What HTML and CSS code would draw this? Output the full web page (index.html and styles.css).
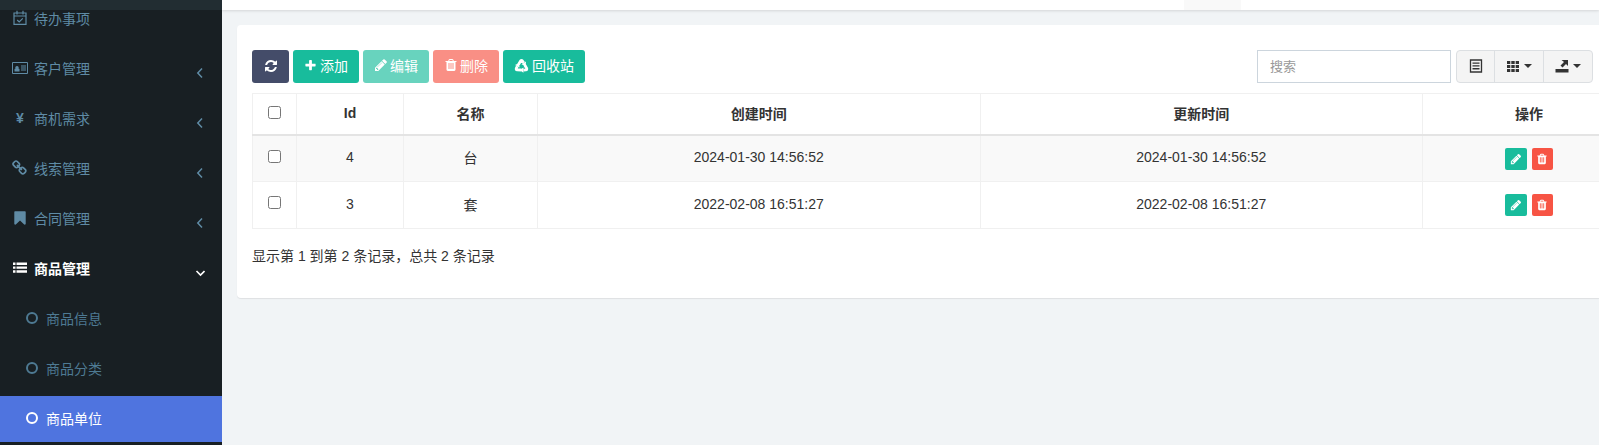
FILE: index.html
```html
<!DOCTYPE html>
<html lang="zh-CN">
<head>
    <meta charset="UTF-8">
    <title>商品单位</title>
    <link rel="stylesheet" href="styles.css">
</head>
<body>

    <!-- icons used more than once -->
    <svg class="sprite" xmlns="http://www.w3.org/2000/svg">
        <symbol id="i-pencil" viewBox="0 0 1792 1792"><path fill="currentColor" d="M491 1536l91-91-235-235-91 91v107h128v128h107zm523-928q0-22-22-22-10 0-17 7l-542 542q-7 7-7 17 0 22 22 22 10 0 17-7l542-542q7-7 7-17zm-54-192l416 416-832 832h-416v-416zm683 96q0 53-37 90l-166 165-416-416 165-166q36-38 90-38 53 0 91 38l235 234q37 39 37 93z"/></symbol>
        <symbol id="i-trash" viewBox="0 0 1792 1792"><path fill="currentColor" d="M704 1376v-704q0-14-9-23t-23-9h-64q-14 0-23 9t-9 23v704q0 14 9 23t23 9h64q14 0 23-9t9-23zm256 0v-704q0-14-9-23t-23-9h-64q-14 0-23 9t-9 23v704q0 14 9 23t23 9h64q14 0 23-9t9-23zm256 0v-704q0-14-9-23t-23-9h-64q-14 0-23 9t-9 23v704q0 14 9 23t23 9h64q14 0 23-9t9-23zm-544-992h448l-48-117q-7-9-17-11h-317q-10 2-17 11zm928 32v64q0 14-9 23t-23 9h-96v948q0 83-47 143.500t-113 60.500h-832q-66 0-113-58.500t-47-141.500v-952h-96q-14 0-23-9t-9-23v-64q0-14 9-23t23-9h309l70-167q15-37 54-63t79-26h320q40 0 79 26t54 63l70 167h309q14 0 23 9t9 23z"/></symbol>
        <symbol id="i-angle-left" viewBox="0 0 10 14"><path fill="none" stroke="currentColor" stroke-width="1.500" d="M7 2.500 2.800 7 7 11.500"/></symbol>
        <symbol id="i-caret" viewBox="0 0 8 4"><path fill="currentColor" d="M0 0h8L4 4z"/></symbol>
        <symbol id="i-arm" viewBox="0 0 16 16"><path fill="none" stroke="currentColor" stroke-width="3" d="M4.800 7 7 3.200Q8 2 9 3.200L10.400 5.200"/><path fill="currentColor" d="M12.800 3.800 8 6.600 12.400 8.800z"/></symbol>
    </svg>

    <div class="layout">

        <aside class="sidebar">
            <div class="sidebar-logo"></div>
            <ul class="menu">
                <li class="menu-item">
                    <svg class="menu-icon" viewBox="0 0 16 16"><path fill="none" stroke="currentColor" stroke-width="1.200" d="M2 3h12v11.400H2zM2 6h12M5 .8v3.600M11 .8v3.600M5.200 10l2 2 3.600-3.600"/></svg>
                    <span>待办事项</span>
                </li>
                <li class="menu-item">
                    <svg class="menu-icon" viewBox="0 0 16 16"><path fill="none" stroke="currentColor" d="M.5 2.500h15v11H.5z"/><path fill="currentColor" d="M3.500 8.500a1.700 1.700 0 1 1 3 0l1 .5v2.500H2.500V9zM9 5.500h5v1H9zM9 7.500h5v1H9zM9 9.500h5v1H9z"/></svg>
                    <span>客户管理</span>
                    <svg class="menu-arrow"><use href="#i-angle-left"/></svg>
                </li>
                <li class="menu-item">
                    <span class="menu-icon menu-yen">¥</span>
                    <span>商机需求</span>
                    <svg class="menu-arrow"><use href="#i-angle-left"/></svg>
                </li>
                <li class="menu-item">
                    <svg class="menu-icon" viewBox="0 0 1792 1792"><path fill="currentColor" d="M1456 1216q0-40-28-68l-208-208q-28-28-68-28-42 0-72 32 3 3 19 18.500t21.500 21.500 15 19 13 25.500 3.500 27.500q0 40-28 68t-68 28q-15 0-27.500-3.500t-25.500-13-19-15-21.500-21.500-18.500-19q-33 31-33 73 0 40 28 68l206 207q27 27 68 27 40 0 68-26l147-146q28-28 28-67zm-703-705q0-40-28-68l-206-207q-28-28-68-28-39 0-68 27l-147 146q-28 28-28 67 0 40 28 68l208 208q27 27 68 27 42 0 72-31-3-3-19-18.500t-21.500-21.500-15-19-13-25.500-3.500-27.500q0-40 28-68t68-28q15 0 27.500 3.500t25.500 13 19 15 21.500 21.500 18.500 19q33-31 33-73zm895 705q0 120-85 203l-147 146q-83 83-203 83-121 0-204-85l-206-207q-83-83-83-203 0-123 88-209l-88-88q-86 88-208 88-120 0-204-84l-208-208q-84-84-84-204t85-203l147-146q83-83 203-83 121 0 204 85l206 207q83 83 83 203 0 123-88 209l88 88q86-88 208-88 120 0 204 84l208 208q84 84 84 204z"/></svg>
                    <span>线索管理</span>
                    <svg class="menu-arrow"><use href="#i-angle-left"/></svg>
                </li>
                <li class="menu-item">
                    <svg class="menu-icon" viewBox="0 0 1792 1792"><path fill="currentColor" d="M1420 128q23 0 44 9 33 13 52.500 41t19.500 62v1289q0 34-19.500 62t-52.500 41q-19 8-44 8-48 0-83-32l-441-424-441 424q-36 33-83 33-23 0-44-9-33-13-52.500-41t-19.500-62v-1289q0-34 19.500-62t52.500-41q21-9 44-9h1048z"/></svg>
                    <span>合同管理</span>
                    <svg class="menu-arrow"><use href="#i-angle-left"/></svg>
                </li>
                <li class="menu-item menu-open">
                    <svg class="menu-icon" viewBox="0 0 16 16"><path fill="currentColor" d="M1 2.500h2.500v2.400H1zM4.500 2.500H15v2.400H4.500zM1 6.400h2.500v2.400H1zM4.500 6.400H15v2.400H4.500zM1 10.300h2.500v2.400H1zM4.500 10.300H15v2.400H4.500z"/></svg>
                    <span>商品管理</span>
                    <svg class="menu-arrow" viewBox="0 0 10 14"><path fill="none" stroke="currentColor" stroke-width="1.600" d="M1.500 5 5.500 9 9.500 5"/></svg>
                </li>
                <li class="menu-item menu-sub"><i class="ring"></i><span>商品信息</span></li>
                <li class="menu-item menu-sub"><i class="ring"></i><span>商品分类</span></li>
                <li class="menu-item menu-sub menu-active"><i class="ring"></i><span>商品单位</span></li>
            </ul>
        </aside>

        <div class="main">
            <header class="topbar"><div class="topbar-tab"></div></header>

            <section class="panel">
                <div class="toolbar">
                    <div class="toolbar-left">
                        <button class="btn btn-dark btn-icon">
                            <svg class="ico ico-lg" viewBox="0 0 1792 1792"><path fill="currentColor" d="M1639 1056q0 5-1 7-64 268-268 434.500t-478 166.500q-146 0-282.500-55t-243.500-157l-129 129q-19 19-45 19t-45-19-19-45v-448q0-26 19-45t45-19h448q26 0 45 19t19 45-19 45l-137 137q71 66 161 102t187 36q134 0 250-65t186-179q11-17 53-117 8-23 30-23h192q13 0 22.500 9.500t9.500 22.500zm25-800v448q0 26-19 45t-45 19h-448q-26 0-45-19t-19-45 19-45l138-138q-148-137-349-137-134 0-250 65t-186 179q-11 17-53 117-8 23-30 23h-199q-13 0-22.500-9.500t-9.500-22.500v-7q65-268 270-434.500t480-166.500q146 0 284 55.500t245 156.500l130-129q19-19 45-19t45 19 19 45z"/></svg>
                        </button>
                        <button class="btn btn-green">
                            <svg class="ico" viewBox="0 0 1792 1792"><path fill="currentColor" d="M1600 736v192q0 40-28 68t-68 28h-416v416q0 40-28 68t-68 28h-192q-40 0-68-28t-28-68v-416h-416q-40 0-68-28t-28-68v-192q0-40 28-68t68-28h416v-416q0-40 28-68t68-28h192q40 0 68 28t28 68v416h416q40 0 68 28t28 68z"/></svg>
                            添加
                        </button>
                        <button class="btn btn-green btn-off"><svg class="ico ico-lg"><use href="#i-pencil"/></svg> 编辑</button>
                        <button class="btn btn-red btn-off"><svg class="ico ico-lg"><use href="#i-trash"/></svg> 删除</button>
                        <button class="btn btn-green">
                            <svg class="ico ico-wide" viewBox="0 0 16 16">
                                <use href="#i-arm" width="16" height="16"/>
                                <use href="#i-arm" width="16" height="16" transform="rotate(120 8 9)"/>
                                <use href="#i-arm" width="16" height="16" transform="rotate(240 8 9)"/>
                            </svg>
                            回收站
                        </button>
                    </div>
                    <div class="toolbar-right">
                        <input class="search" type="text" placeholder="搜索">
                        <div class="btn-group">
                            <button class="tool">
                                <svg class="tool-ico" viewBox="0 0 14 14"><path fill="none" stroke="currentColor" stroke-width="1.300" d="M1.500 1h11v12h-11z"/><path fill="currentColor" d="M3.500 3.500h7v1.300h-7zM3.500 6.300h7v1.300h-7zM3.500 9.100h7v1.300h-7z"/></svg>
                            </button>
                            <button class="tool">
                                <svg class="tool-ico" viewBox="0 0 14 14"><path fill="currentColor" d="M1 2h3.300v3H1zM5.300 2h3.400v3H5.300zM9.700 2H13v3H9.700zM1 6h3.300v3H1zM5.300 6h3.400v3H5.300zM9.700 6H13v3H9.700zM1 10h3.300v3H1zM5.300 10h3.400v3H5.300zM9.700 10H13v3H9.700z"/></svg>
                                <svg class="caret"><use href="#i-caret"/></svg>
                            </button>
                            <button class="tool">
                                <svg class="tool-ico" viewBox="0 0 14 14"><path fill="currentColor" d="M.5 10h13v3.500H.5zM6.500 1H13v6l-2-2-3.500 3.500-2-2L9 3z"/></svg>
                                <svg class="caret"><use href="#i-caret"/></svg>
                            </button>
                        </div>
                    </div>
                </div>

                <table class="grid">
                    <thead>
                        <tr>
                            <th class="col-check"><input type="checkbox"></th>
                            <th class="col-id">Id</th>
                            <th class="col-name">名称</th>
                            <th class="col-time">创建时间</th>
                            <th class="col-time">更新时间</th>
                            <th>操作</th>
                        </tr>
                    </thead>
                    <tbody>
                        <tr class="row-odd">
                            <td><input type="checkbox"></td>
                            <td>4</td>
                            <td>台</td>
                            <td>2024-01-30 14:56:52</td>
                            <td>2024-01-30 14:56:52</td>
                            <td>
                                <span class="act act-edit"><svg class="act-ico"><use href="#i-pencil"/></svg></span>
                                <span class="act act-del"><svg class="act-ico"><use href="#i-trash"/></svg></span>
                            </td>
                        </tr>
                        <tr>
                            <td><input type="checkbox"></td>
                            <td>3</td>
                            <td>套</td>
                            <td>2022-02-08 16:51:27</td>
                            <td>2022-02-08 16:51:27</td>
                            <td>
                                <span class="act act-edit"><svg class="act-ico"><use href="#i-pencil"/></svg></span>
                                <span class="act act-del"><svg class="act-ico"><use href="#i-trash"/></svg></span>
                            </td>
                        </tr>
                    </tbody>
                </table>

                <p class="summary">显示第 1 到第 2 条记录，总共 2 条记录</p>
            </section>
        </div>

    </div>

</body>
</html>
```

FILE: styles.css
```css
html, body {
    margin: 0;
    padding: 0;
    height: 445px;
    overflow: hidden;
}
body {
    font-family: "Liberation Sans", "Noto Sans CJK SC", sans-serif;
    font-size: 14px;
    color: #333;
    background: #f1f4f6;
}
.sprite {
    display: none;
}
.layout {
    display: flex;
    height: 445px;
}

/* sidebar */
.sidebar {
    position: relative;
    width: 222px;
    flex: none;
    overflow: hidden;
    background: #181f23;
}
.sidebar-logo {
    position: absolute;
    top: 0;
    left: 0;
    right: 0;
    height: 10px;
    background: #222d32;
}
.menu {
    list-style: none;
    margin: -4px 0 0;
    padding: 0;
}
.menu-item {
    display: flex;
    align-items: center;
    box-sizing: border-box;
    height: 46px;
    margin-bottom: 4px;
    padding: 0 0 3px 12px;
    color: #5f8ba5;
    position: relative;
}
.menu-icon {
    width: 16px;
    height: 16px;
    flex: none;
    margin-right: 6px;
}
.menu-yen {
    font-size: 14px;
    font-weight: bold;
    line-height: 16px;
    text-align: center;
}
.menu-arrow {
    position: absolute;
    right: 17px;
    top: 20px;
    width: 10px;
    height: 14px;
}
.menu-open {
    color: #fff;
    font-weight: bold;
}
.menu-sub {
    padding-left: 26px;
    color: #4e7a93;
}
.ring {
    width: 8px;
    height: 8px;
    border: 2px solid currentColor;
    border-radius: 50%;
    margin-right: 8px;
}
.menu-active {
    background: #4f74df;
    color: #fff;
}

/* main area */
.main {
    flex: 1;
    min-width: 0;
}
.topbar {
    height: 10px;
    background: #fff;
    box-shadow: 0 1px 3px rgba(0, 0, 0, .12);
    display: flex;
    justify-content: flex-end;
    padding-right: 358px;
}
.topbar-tab {
    width: 57px;
    background: #f9f9f9;
}
.panel {
    box-sizing: border-box;
    margin: 15px 0 0 15px;
    height: 273px;
    padding: 25px 6px 0 15px;
    background: #fff;
    border-radius: 4px 0 0 4px;
    box-shadow: 0 1px 1px rgba(0, 0, 0, .08);
}

/* toolbar */
.toolbar {
    display: flex;
    justify-content: space-between;
    height: 33px;
    margin-bottom: 10px;
}
.toolbar-left,
.toolbar-right {
    display: flex;
}
.btn {
    height: 33px;
    padding: 0 11px 3px;
    margin-right: 4px;
    border: 0;
    border-radius: 3px;
    color: #fff;
    font-family: inherit;
    font-size: 14px;
    display: flex;
    align-items: center;
    gap: 3px;
}
.btn-icon {
    width: 37px;
    padding: 0 0 2px;
    justify-content: center;
}
.btn-dark {
    background: #444c69;
}
.btn-green {
    background: #18bc9c;
}
.btn-red {
    background: #f75444;
}
.btn-off {
    opacity: .65;
}
.ico {
    width: 13px;
    height: 13px;
}
.ico-lg {
    width: 14px;
    height: 14px;
}
.btn-off .ico-lg {
    margin-right: -1px;
}
.ico-wide {
    width: 15px;
    height: 15px;
}
.search {
    width: 194px;
    height: 33px;
    box-sizing: border-box;
    padding: 0 12px;
    margin-right: 5px;
    border: 1px solid #ccd5dd;
    font-family: inherit;
    font-size: 13px;
    outline: none;
}
.search::placeholder {
    color: #999;
}
.btn-group {
    display: flex;
    height: 33px;
    box-sizing: border-box;
    border: 1px solid #dcdfe2;
    border-radius: 4px;
    background: #f4f4f4;
}
.tool {
    display: flex;
    align-items: center;
    justify-content: center;
    gap: 4px;
    height: 100%;
    padding: 0 0 2px;
    border: 0;
    background: none;
    color: #333;
    border-left: 1px solid #dcdfe2;
}
.tool:first-child {
    width: 37px;
    border-left: 0;
}
.tool:nth-child(2) {
    width: 49px;
}
.tool:nth-child(3) {
    width: 49px;
}
.tool-ico {
    width: 14px;
    height: 14px;
}
.caret {
    width: 8px;
    height: 4px;
}

/* table */
.grid {
    width: 1384px;
    table-layout: fixed;
    border-collapse: collapse;
    border: 1px solid #f0f0f0;
    color: #333;
}
.grid th,
.grid td {
    padding: 0 0 3px;
    text-align: center;
    border: 1px solid #f0f0f0;
    font-size: 14px;
}
.grid th {
    height: 38px;
    padding-bottom: 2px;
    font-weight: bold;
    border-bottom: 2px solid #e4e4e4;
}
.grid td {
    height: 43px;
}
.grid .row-odd td {
    height: 42px;
}
.grid input {
    margin: 0 0 3px;
    width: 13px;
    height: 13px;
    vertical-align: middle;
}
.col-check {
    width: 43px;
}
.col-id {
    width: 106px;
}
.col-name {
    width: 133px;
}
.col-time {
    width: 441.5px;
}
.row-odd {
    background: #f9f9f9;
}
.act {
    display: inline-flex;
    align-items: center;
    justify-content: center;
    width: 22px;
    height: 22px;
    margin-top: 3px;
    border-radius: 2px;
    color: #fff;
    vertical-align: middle;
}
.act-edit {
    background: #18bc9c;
}
.act-del {
    background: #f75444;
    width: 21px;
    margin-left: 1px;
}
.act-ico {
    width: 12px;
    height: 12px;
}
.summary {
    margin: 17px 0 0;
    line-height: 20px;
}
```
